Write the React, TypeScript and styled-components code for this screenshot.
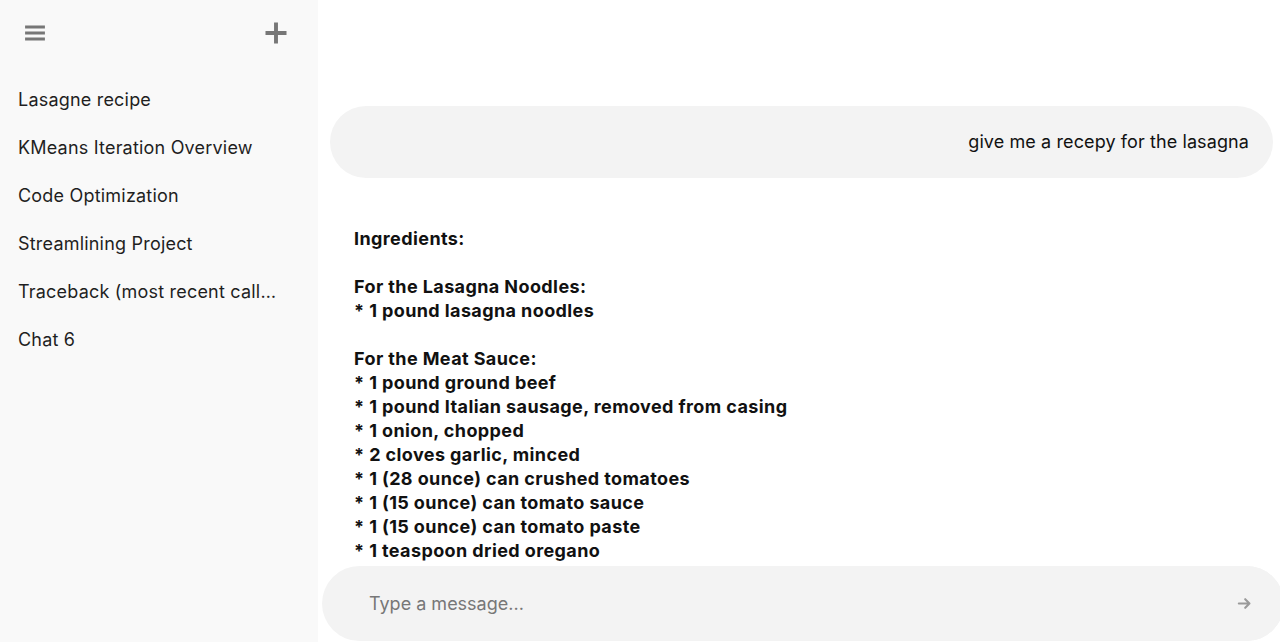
import React from "react";
import styled, { createGlobalStyle } from "styled-components";

const Global = createGlobalStyle`
  html, body { margin: 0; padding: 0; height: 100%; overflow: hidden; }
  body { font-family: Inter, Roboto, "Noto Sans", sans-serif; color: #1f1f1f; background: #fff; }
  #root { height: 100%; }
  * { box-sizing: border-box; }
`;

const Layout = styled.div`
  display: flex;
  width: 1280px;
  height: 642px;
  overflow: hidden;
`;

const Sidebar = styled.aside`
  width: 318px;
  flex: none;
  background: #f9f9f9;
  display: flex;
  flex-direction: column;
`;

const SideHeader = styled.div`
  height: 66px;
  display: flex;
  align-items: center;
  justify-content: space-between;
  padding: 0 24px 0 21px;
`;

const IconButton = styled.button`
  border: none;
  background: none;
  padding: 0;
  display: flex;
  color: #777;
  cursor: pointer;
`;

const ChatList = styled.ul`
  list-style: none;
  margin: 10px 0 0;
  padding: 0;
`;

const ChatItem = styled.li`
  padding: 12px 40px 12px 18px;
  font-size: 18px;
  line-height: 24px;
  letter-spacing: 0.2px;
  white-space: nowrap;
  overflow: hidden;
  text-overflow: ellipsis;
  color: #1f1f1f;
`;

const Main = styled.main`
  flex: 1;
  display: flex;
  flex-direction: column;
  min-width: 0;
`;

const Messages = styled.div`
  flex: 1;
  overflow: hidden;
  padding: 106px 7px 0 12px;
  display: flex;
  flex-direction: column;
  gap: 25px;
`;

const Bubble = styled.div<{ $user?: boolean }>`
  border-radius: 36px;
  padding: 24px;
  font-size: 18px;
  line-height: 24px;
  white-space: pre-wrap;
  background: ${(p) => (p.$user ? "#f3f3f3" : "transparent")};
  text-align: ${(p) => (p.$user ? "right" : "left")};
  font-weight: ${(p) => (p.$user ? 400 : 700)};
  letter-spacing: ${(p) => (p.$user ? "0.1px" : "0.4px")};
  color: #111;
`;

const InputBar = styled.form`
  flex: none;
  height: 75px;
  margin: 0 -4px 1px 4px;
  display: flex;
  align-items: center;
  background: #f3f3f3;
  border-radius: 38px;
`;

const TextInput = styled.input`
  flex: 1;
  border: none;
  background: transparent;
  outline: none;
  font-family: inherit;
  font-size: 18px;
  padding: 0 0 0 47px;
  color: #1f1f1f;
  &::placeholder { color: #777; }
`;

const SendButton = styled.button`
  width: 76px;
  height: 75px;
  border: none;
  background: #f3f3f3;
  border-radius: 0 38px 38px 0;
  display: flex;
  align-items: center;
  padding: 0 0 0 28px;
  color: #9a9a9a;
  cursor: pointer;
`;

const chats = [
  "Lasagne recipe",
  "KMeans Iteration Overview",
  "Code Optimization",
  "Streamlining Project",
  "Traceback (most recent call last)",
  "Chat 6",
];

const answer = `Ingredients:

For the Lasagna Noodles:
* 1 pound lasagna noodles

For the Meat Sauce:
* 1 pound ground beef
* 1 pound Italian sausage, removed from casing
* 1 onion, chopped
* 2 cloves garlic, minced
* 1 (28 ounce) can crushed tomatoes
* 1 (15 ounce) can tomato sauce
* 1 (15 ounce) can tomato paste
* 1 teaspoon dried oregano`;

export default function App() {
  return (
    <>
      <Global />
      <Layout>
        <Sidebar>
          <SideHeader>
            <IconButton aria-label="menu">
              <svg width="28" height="28" viewBox="0 0 24 24" fill="currentColor">
                <path d="M3.5 18.5h17v-2.6h-17v2.6zm0-5.2h17v-2.6h-17v2.6zM3.5 5.5v2.6h17V5.5h-17z" />
              </svg>
            </IconButton>
            <IconButton aria-label="new chat">
              <svg width="36" height="36" viewBox="0 0 24 24" fill="currentColor">
                <path d="M19 13.3h-5.7V19h-2.6v-5.7H5v-2.6h5.7V5h2.6v5.7H19v2.6z" />
              </svg>
            </IconButton>
          </SideHeader>
          <ChatList>
            {chats.map((c) => (
              <ChatItem key={c}>{c}</ChatItem>
            ))}
          </ChatList>
        </Sidebar>
        <Main>
          <Messages>
            <Bubble $user>give me a recepy for the lasagna</Bubble>
            <Bubble>{answer}</Bubble>
          </Messages>
          <InputBar onSubmit={(e) => e.preventDefault()}>
            <TextInput placeholder="Type a message..." />
            <SendButton type="submit" aria-label="send">
              <svg width="17" height="17" viewBox="0 0 24 24" fill="none" stroke="currentColor" strokeWidth="3" strokeLinecap="round" strokeLinejoin="round">
                <path d="M4 12h15M13 6l6 6-6 6" />
              </svg>
            </SendButton>
          </InputBar>
        </Main>
      </Layout>
    </>
  );
}
